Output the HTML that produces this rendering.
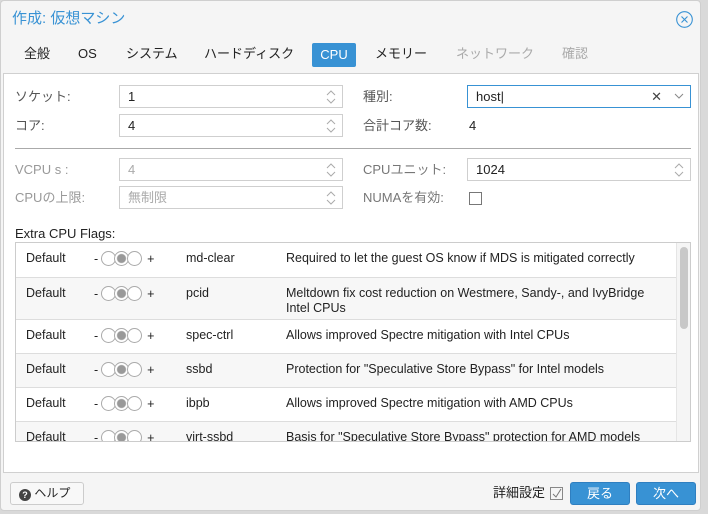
<!DOCTYPE html><html><head><meta charset="utf-8"><style>
*{box-sizing:border-box;margin:0;padding:0}
body{width:708px;height:514px;background:#d9d9d9;font-family:"Liberation Sans","Noto Sans CJK JP",sans-serif;font-size:13px;line-height:16px;color:#222;position:relative;overflow:hidden}
.win{position:absolute;left:0;top:0;width:701px;height:511px;background:#f5f5f5;border:1px solid #cfcfcf;border-radius:4px}
.abs{position:absolute}
.title{left:11px;top:9px;font-size:15px;line-height:18px;color:#3892d4}
.close{left:675px;top:10px;width:17px;height:17px}
.tab{top:45px;font-size:13px;color:#222}
.tab.dis{color:#aaa}
.cpu{left:311px;top:42px;width:44px;height:24px;background:#3892d4;color:#fff;text-align:center;line-height:24px;border-radius:2px}
.body{left:2px;top:72px;width:696px;height:400px;background:#fff;border:1px solid #d0d0d0}
.lbl{font-size:13px;color:#555}
.in{height:23px;border:1px solid #cfcfcf;background:#fff;padding-left:8px;line-height:21px;font-size:13px}
.sp{position:absolute;right:6px;top:3px;width:10px;height:16px}
table{position:absolute;left:0;top:0;width:660px;border-collapse:collapse;table-layout:fixed}
td{border-bottom:1px solid #ddd;vertical-align:top;padding-top:8px;font-size:12.5px;line-height:15px;white-space:nowrap}
td.d{white-space:normal}
tr:nth-child(2n) td{background:#f7f7f7}
.c{display:inline-block;width:15px;height:15px;border:1px solid #aaa;border-radius:50%;margin-right:-2px;vertical-align:-3px;background:#fff}
.c.on{background:radial-gradient(circle,#999 0 4px,#fff 5px)}
.c.l{margin-left:3px}.c.r{margin-right:5px}
.btn{height:23px;border-radius:3px;background:#3892d4;color:#fff;text-align:center;line-height:21px;border:1px solid #2f7fc0}
</style></head><body>
<svg width="0" height="0" style="position:absolute"><defs><g id="sp"><path d="M1 6 L5 2 L9 6 M1 10 L5 14 L9 10" fill="none" stroke="#aaa" stroke-width="1"/></g></defs></svg>
<div class="win">
<div class="abs title">作成: 仮想マシン</div>
<svg class="abs close" viewBox="0 0 17 17"><circle cx="8.5" cy="8.5" r="7.8" fill="none" stroke="#3892d4" stroke-width="1.1"/><path d="M5.5 5.5 L11.5 11.5 M11.5 5.5 L5.5 11.5" stroke="#3892d4" stroke-width="1.1"/></svg>
<div class="abs tab" style="left:23px">全般</div>
<div class="abs tab" style="left:77px">OS</div>
<div class="abs tab" style="left:125px">システム</div>
<div class="abs tab" style="left:203px">ハードディスク</div>
<div class="abs cpu">CPU</div>
<div class="abs tab" style="left:374px">メモリー</div>
<div class="abs tab dis" style="left:455px">ネットワーク</div>
<div class="abs tab dis" style="left:561px">確認</div>
<div class="abs body"></div>
<div class="abs lbl" style="left:14px;top:88px">ソケット:</div>
<div class="abs in" style="left:118px;top:84px;width:224px">1<svg class="sp"><use href="#sp"/></svg></div>
<div class="abs lbl" style="left:362px;top:88px">種別:</div>
<div class="abs in" style="left:466px;top:84px;width:224px;border-color:#3892d4">host|<span style="position:absolute;right:28px;color:#444">✕</span><svg style="position:absolute;right:6px;top:7px" width="10" height="6"><path d="M1 1 L5 5 L9 1" fill="none" stroke="#888"/></svg></div>
<div class="abs lbl" style="left:14px;top:117px">コア:</div>
<div class="abs in" style="left:118px;top:113px;width:224px">4<svg class="sp"><use href="#sp"/></svg></div>
<div class="abs lbl" style="left:362px;top:117px">合計コア数:</div>
<div class="abs" style="left:468px;top:117px">4</div>
<div class="abs" style="left:14px;top:147px;width:676px;height:1px;background:#aaa"></div>
<div class="abs lbl" style="left:14px;top:161px;color:#999">VCPU s :</div>
<div class="abs in" style="left:118px;top:157px;width:224px;color:#aaa">4<svg class="sp"><use href="#sp"/></svg></div>
<div class="abs lbl" style="left:362px;top:161px;color:#777">CPUユニット:</div>
<div class="abs in" style="left:466px;top:157px;width:224px">1024<svg class="sp"><use href="#sp"/></svg></div>
<div class="abs lbl" style="left:14px;top:189px;color:#999">CPUの上限:</div>
<div class="abs in" style="left:118px;top:185px;width:224px;color:#aaa">無制限<svg class="sp"><use href="#sp"/></svg></div>
<div class="abs lbl" style="left:362px;top:189px;color:#777">NUMAを有効:</div>
<div class="abs" style="left:468px;top:191px;width:13px;height:13px;border:1px solid #777"></div>
<div class="abs" style="left:14px;top:225px">Extra CPU Flags:</div>
<div class="abs" style="left:14px;top:241px;width:676px;height:200px;border:1px solid #ccc;overflow:hidden">
<table>
<colgroup><col style="width:78px"><col style="width:92px"><col style="width:100px"><col></colgroup>
<tr style="height:34px"><td style="padding-left:10px">Default</td><td>-<span class="c l"></span><span class="c on"></span><span class="c r"></span>+</td><td>md-clear</td><td class="d">Required to let the guest OS know if MDS is mitigated correctly</td></tr>
<tr style="height:42px"><td style="padding-left:10px">Default</td><td>-<span class="c l"></span><span class="c on"></span><span class="c r"></span>+</td><td>pcid</td><td class="d">Meltdown fix cost reduction on Westmere, Sandy-, and IvyBridge<br>Intel CPUs</td></tr>
<tr style="height:34px"><td style="padding-left:10px">Default</td><td>-<span class="c l"></span><span class="c on"></span><span class="c r"></span>+</td><td>spec-ctrl</td><td class="d">Allows improved Spectre mitigation with Intel CPUs</td></tr>
<tr style="height:34px"><td style="padding-left:10px">Default</td><td>-<span class="c l"></span><span class="c on"></span><span class="c r"></span>+</td><td>ssbd</td><td class="d">Protection for "Speculative Store Bypass" for Intel models</td></tr>
<tr style="height:34px"><td style="padding-left:10px">Default</td><td>-<span class="c l"></span><span class="c on"></span><span class="c r"></span>+</td><td>ibpb</td><td class="d">Allows improved Spectre mitigation with AMD CPUs</td></tr>
<tr style="height:34px"><td style="padding-left:10px">Default</td><td>-<span class="c l"></span><span class="c on"></span><span class="c r"></span>+</td><td>virt-ssbd</td><td class="d">Basis for "Speculative Store Bypass" protection for AMD models</td></tr>
</table>
<div class="abs" style="left:660px;top:0;width:15px;height:200px;background:#f5f5f5;border-left:1px solid #e5e5e5"><div style="margin:4px 3px;width:8px;height:82px;background:#c8c8c8;border-radius:4px"></div></div>
</div>
<div class="abs" style="left:9px;top:481px;width:74px;height:23px;border:1px solid #ccc;border-radius:3px;background:#f8f8f8;line-height:21px;padding-left:8px;font-size:12px"><span style="display:inline-block;width:12px;height:12px;border-radius:50%;background:#444;color:#fff;font-size:9px;line-height:12px;text-align:center;font-weight:bold;vertical-align:-1px">?</span> ヘルプ</div>
<div class="abs" style="left:492px;top:484px">詳細設定</div>
<div class="abs" style="left:549px;top:486px;width:13px;height:13px;border:1px solid #888"><svg width="11" height="11" style="position:absolute;left:0;top:0"><path d="M2 6 L5 9 L10 1" fill="none" stroke="#777"/></svg></div>
<div class="abs btn" style="left:569px;top:481px;width:60px">戻る</div>
<div class="abs btn" style="left:635px;top:481px;width:60px">次へ</div>
</div>
</body></html>
